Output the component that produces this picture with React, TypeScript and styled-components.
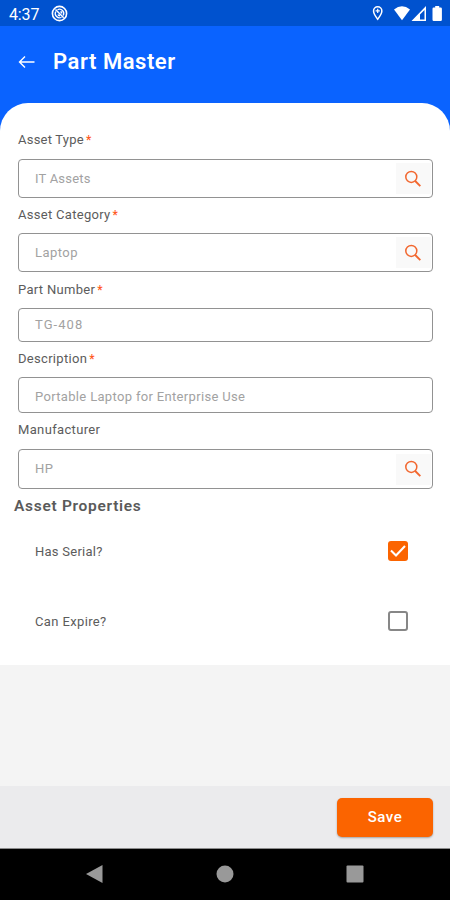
import React, { useState } from 'react';
import styled, { createGlobalStyle } from 'styled-components';

const GlobalStyle = createGlobalStyle`
  * { box-sizing: border-box; }
  body { margin: 0; background: #f4f4f4; font-family: Roboto, 'Noto Sans', sans-serif; }
`;

const Screen = styled.div`
  width: 450px;
  height: 900px;
  display: flex;
  flex-direction: column;
  background: #f4f4f4;
  overflow: hidden;
`;

const StatusBar = styled.div`
  height: 26px;
  flex: none;
  display: flex;
  align-items: center;
  justify-content: space-between;
  padding: 1px 7px 0 9px;
  background: #0052cf;
  color: #fff;
`;

const StatusGroup = styled.div`
  display: flex;
  align-items: center;
`;

const Clock = styled.span`
  width: 42px;
  padding-top: 2px;
  font-size: 16px;
  line-height: 20px;
  letter-spacing: -0.15px;
`;

const Header = styled.header`
  height: 77px;
  flex: none;
  display: flex;
  align-items: center;
  padding: 0 18px 5px;
  gap: 18px;
  background: #0a63ff;
  color: #fff;
`;

const IconButton = styled.button`
  display: flex;
  padding: 0;
  border: 0;
  background: transparent;
  color: inherit;
`;

const PageTitle = styled.h1`
  margin: 0;
  font-size: 22px;
  font-weight: 600;
  line-height: 28px;
  letter-spacing: 0.55px;
`;

const CardBackdrop = styled.div`
  flex: none;
  background: linear-gradient(#0a63ff 28px, #fff 28px);
`;

const Card = styled.main`
  height: 562px;
  padding: 27px 17px 0 18px;
  border-radius: 28px 28px 0 0;
  background: #fff;
`;

const Field = styled.div<{ $gap: number }>`
  margin-bottom: ${(p) => p.$gap}px;
`;

const Label = styled.label<{ $tracking: number; $space: number }>`
  display: block;
  height: 20px;
  margin-bottom: ${(p) => p.$space}px;
  font-size: 13px;
  line-height: 20px;
  letter-spacing: ${(p) => p.$tracking}px;
  color: #5c5c5c;
`;

const Required = styled.span`
  margin-left: 2px;
  font-size: 12px;
  font-weight: 500;
  letter-spacing: 0;
  color: #ff5a1f;
`;

const InputBox = styled.div<{ $height: number }>`
  height: ${(p) => p.$height}px;
  display: flex;
  align-items: center;
  justify-content: space-between;
  padding: 0 1px 0 16px;
  border: 1px solid #929292;
  border-radius: 4px;
`;

const Value = styled.span<{ $tracking: number; $drop: number }>`
  padding-top: ${(p) => p.$drop}px;
  font-size: 13px;
  line-height: 18px;
  letter-spacing: ${(p) => p.$tracking}px;
  white-space: nowrap;
  color: #a2a2a2;
`;

const SearchButton = styled.button`
  width: 35px;
  height: 31px;
  display: flex;
  align-items: center;
  justify-content: center;
  padding: 0 1px 0 0;
  border: 0;
  background: #f9f9f9;
`;

const SectionTitle = styled.h2`
  height: 20px;
  margin: 0 0 0 -4px;
  font-size: 15.5px;
  font-weight: 600;
  line-height: 20px;
  letter-spacing: 0.7px;
  color: #5a5a5a;
`;

const OptionRow = styled.div`
  height: 70px;
  display: flex;
  align-items: center;
  justify-content: space-between;
  padding: 0 25px 0 17px;
`;

const OptionLabel = styled.span<{ $tracking: number }>`
  font-size: 13px;
  letter-spacing: ${(p) => p.$tracking}px;
  color: #5c5c5c;
`;

const CheckButton = styled.button<{ $checked: boolean }>`
  width: 20px;
  height: 20px;
  display: flex;
  padding: 0;
  border: ${(p) => (p.$checked ? '0' : '2px solid #878787')};
  border-radius: 3px;
  background: ${(p) => (p.$checked ? '#fb6400' : '#fff')};
`;

const Footer = styled.footer`
  height: 63px;
  flex: none;
  display: flex;
  justify-content: flex-end;
  align-items: flex-start;
  margin-top: auto;
  padding: 12px 17px 0;
  background: #ebebed;
  border-bottom: 1px solid #8b8b8c;
`;

const SaveButton = styled.button`
  width: 96px;
  height: 39px;
  padding: 0 0 1px;
  border: 0;
  border-radius: 5px;
  background: #fb6400;
  box-shadow: 0 1px 2px rgba(0, 0, 0, 0.3);
  color: #fff;
  font: 500 15px/38px Roboto, sans-serif;
  letter-spacing: 0.5px;
`;

const NavBar = styled.nav`
  height: 51px;
  flex: none;
  display: flex;
  justify-content: space-between;
  align-items: center;
  padding: 0 86px 1px 85px;
  background: #000;
`;

const SearchIcon = () => (
  <svg width="18" height="18" viewBox="0 0 18 18" fill="none" stroke="#f2672f">
    <circle cx="7.3" cy="6.9" r="5.5" strokeWidth="1.5" />
    <path d="M11.2 11 16.3 16.1" strokeWidth="1.9" />
  </svg>
);

type FieldData = {
  label: string;
  value: string;
  labelTracking?: number;
  valueTracking?: number;
  drop?: number;
  required?: boolean;
  search?: boolean;
  height: number;
  space: number;
  gap: number;
};

const fields: FieldData[] = [
  { label: 'Asset Type', value: 'IT Assets', labelTracking: 0.22, valueTracking: 0.2, required: true, search: true, height: 39, space: 9, gap: 7 },
  { label: 'Asset Category', value: 'Laptop', valueTracking: 0.45, required: true, search: true, height: 39, space: 8, gap: 8 },
  { label: 'Part Number', value: 'TG-408', valueTracking: 1.05, required: true, height: 34, space: 8, gap: 7 },
  { label: 'Description', value: 'Portable Laptop for Enterprise Use', valueTracking: 0.33, drop: 3, required: true, height: 36, space: 8, gap: 7 },
  { label: 'Manufacturer', value: 'HP', labelTracking: 0.35, valueTracking: 0.5, search: true, height: 40, space: 9, gap: 7 },
];

const options = [
  { label: 'Has Serial?', tracking: 0.25, initial: true },
  { label: 'Can Expire?', tracking: 0.37, initial: false },
];

function Option({ label, tracking, initial }: (typeof options)[number]) {
  const [checked, setChecked] = useState(initial);
  return (
    <OptionRow>
      <OptionLabel $tracking={tracking}>{label}</OptionLabel>
      <CheckButton $checked={checked} role="checkbox" aria-checked={checked} aria-label={label} onClick={() => setChecked(!checked)}>
        {checked && (
          <svg width="20" height="20" viewBox="0 0 20 20" fill="none" stroke="#fff" strokeWidth="2.1">
            <path d="m3 9.5 5 5L17 5" />
          </svg>
        )}
      </CheckButton>
    </OptionRow>
  );
}

export default function App() {
  return (
    <Screen>
      <GlobalStyle />
      <StatusBar>
        <StatusGroup>
          <Clock>4:37</Clock>
          <svg width="17" height="17" viewBox="0 0 17 17" fill="none" stroke="#fff">
            <circle cx="8.5" cy="8.5" r="7.1" strokeWidth="1.6" />
            <path d="M6.5 4.8A4.2 4.2 0 0 1 12.2 10.5M10.5 12.2A4.2 4.2 0 0 1 4.8 6.5" strokeWidth="1.3" />
            <path d="m4.5 4.5 8.2 8.2M7 9.5a2 2 0 0 0 2 1.3M9.5 6.5a2 2 0 0 1 1.2 2" strokeWidth="1.5" />
          </svg>
        </StatusGroup>
        <svg width="71" height="17" viewBox="0 0 71 17" fill="#fff">
          <path fillRule="evenodd" d="M5.7 1A4.9 4.9 0 0 0 .8 5.9C.8 9.5 5.7 15.3 5.7 15.3S10.6 9.5 10.6 5.9A4.9 4.9 0 0 0 5.7 1Zm0 1.5A3.4 3.4 0 0 1 9.1 6c0 2-1.8 4.900-3.400 6.900C4.100 10.900 2.300 8 2.300 6a3.400 3.400 0 0 1 3.400-3.500Z" />
          <path d="M5.1 3.8h1.2v1.5h1.5v1.2H6.3V8H5.1V6.5H3.6V5.3h1.5Z" />
          <path d="M22 4.5Q30-2 38 4.5L30 15.2Z" />
          <path fillRule="evenodd" d="M54 1v15H39.5ZM52.5 5 48 9.6v4.9h4.5Z" />
          <path d="M60.5 3.7a1.200 1.200 0 0 1 1.200-1.200h1.500V1h4v1.500h1.500a1.200 1.200 0 0 1 1.200 1.200v11a1.200 1.200 0 0 1-1.200 1.200h-7a1.200 1.200 0 0 1-1.200-1.200Z" />
        </svg>
      </StatusBar>
      <Header>
        <IconButton aria-label="Back">
          <svg width="17" height="14" viewBox="0 0 17 14" fill="none" stroke="#fff" strokeWidth="1.4">
            <path d="M16.5 7H1.5M7 1.5 1.5 7 7 12.5" />
          </svg>
        </IconButton>
        <PageTitle>Part Master</PageTitle>
      </Header>
      <CardBackdrop>
        <Card>
          {fields.map((f) => (
            <Field key={f.label} $gap={f.gap}>
              <Label $tracking={f.labelTracking ?? 0.3} $space={f.space}>
                {f.label}
                {f.required && <Required>*</Required>}
              </Label>
              <InputBox $height={f.height}>
                <Value $tracking={f.valueTracking ?? 0.3} $drop={f.drop ?? 0}>
                  {f.value}
                </Value>
                {f.search && (
                  <SearchButton aria-label={`Search ${f.label}`}>
                    <SearchIcon />
                  </SearchButton>
                )}
              </InputBox>
            </Field>
          ))}
          <SectionTitle>Asset Properties</SectionTitle>
          {options.map((o) => (
            <Option key={o.label} {...o} />
          ))}
        </Card>
      </CardBackdrop>
      <Footer>
        <SaveButton>Save</SaveButton>
      </Footer>
      <NavBar>
        <svg width="18" height="20" viewBox="0 0 18 20" fill="#999">
          <path d="M17.5 1v18L1 10Z" />
        </svg>
        <svg width="18" height="18" viewBox="0 0 18 18" fill="#999">
          <circle cx="9" cy="9" r="8.5" />
        </svg>
        <svg width="18" height="18" viewBox="0 0 18 18" fill="#999">
          <rect x=".5" y=".5" width="17" height="17" rx="1" />
        </svg>
      </NavBar>
    </Screen>
  );
}
